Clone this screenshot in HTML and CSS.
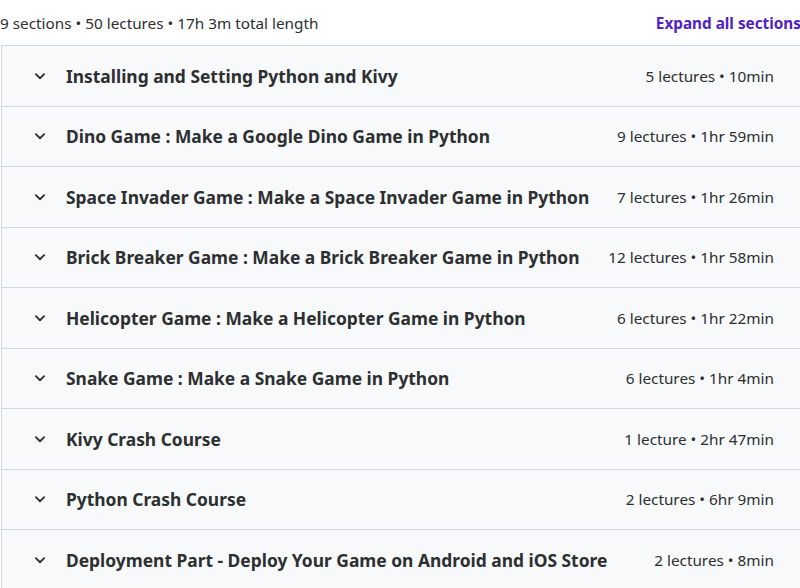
FILE: index.html
```html
<!DOCTYPE html>
<html lang="en">

<head>
    <meta charset="UTF-8">
    <meta name="viewport" content="width=device-width, initial-scale=1.0">
    <title>Course content</title>
    <link rel="stylesheet" href="styles.css">
</head>

<body>
    <div class="conteudo">
        <div class="cabecalho">
            <span class="resumo">9 sections • 50 lectures • 17h 3m total length</span>
            <button class="expandir">Expand all sections</button>
        </div>

        <div class="secoes">
            <div class="secao">
                <svg class="seta" viewBox="0 0 24 24"><path d="M6.5 9.5l5.5 5.5 5.5-5.5"/></svg>
                <span class="titulo">Installing and Setting Python and Kivy</span>
                <span class="info">5 lectures • 10min</span>
            </div>
            <div class="secao">
                <svg class="seta" viewBox="0 0 24 24"><path d="M6.5 9.5l5.5 5.5 5.5-5.5"/></svg>
                <span class="titulo">Dino Game : Make a Google Dino Game in Python</span>
                <span class="info">9 lectures • 1hr 59min</span>
            </div>
            <div class="secao">
                <svg class="seta" viewBox="0 0 24 24"><path d="M6.5 9.5l5.5 5.5 5.5-5.5"/></svg>
                <span class="titulo">Space Invader Game : Make a Space Invader Game in Python</span>
                <span class="info">7 lectures • 1hr 26min</span>
            </div>
            <div class="secao">
                <svg class="seta" viewBox="0 0 24 24"><path d="M6.5 9.5l5.5 5.5 5.5-5.5"/></svg>
                <span class="titulo">Brick Breaker Game : Make a Brick Breaker Game in Python</span>
                <span class="info">12 lectures • 1hr 58min</span>
            </div>
            <div class="secao">
                <svg class="seta" viewBox="0 0 24 24"><path d="M6.5 9.5l5.5 5.5 5.5-5.5"/></svg>
                <span class="titulo">Helicopter Game : Make a Helicopter Game in Python</span>
                <span class="info">6 lectures • 1hr 22min</span>
            </div>
            <div class="secao">
                <svg class="seta" viewBox="0 0 24 24"><path d="M6.5 9.5l5.5 5.5 5.5-5.5"/></svg>
                <span class="titulo">Snake Game : Make a Snake Game in Python</span>
                <span class="info">6 lectures • 1hr 4min</span>
            </div>
            <div class="secao">
                <svg class="seta" viewBox="0 0 24 24"><path d="M6.5 9.5l5.5 5.5 5.5-5.5"/></svg>
                <span class="titulo">Kivy Crash Course</span>
                <span class="info">1 lecture • 2hr 47min</span>
            </div>
            <div class="secao">
                <svg class="seta" viewBox="0 0 24 24"><path d="M6.5 9.5l5.5 5.5 5.5-5.5"/></svg>
                <span class="titulo">Python Crash Course</span>
                <span class="info">2 lectures • 6hr 9min</span>
            </div>
            <div class="secao">
                <svg class="seta" viewBox="0 0 24 24"><path d="M6.5 9.5l5.5 5.5 5.5-5.5"/></svg>
                <span class="titulo">Deployment Part - Deploy Your Game on Android and iOS Store</span>
                <span class="info">2 lectures • 8min</span>
            </div>
        </div>
    </div>
</body>

</html>
```

FILE: styles.css
```css
body {
    margin: 0;
    background-color: #fff;
    font-family: "Noto Sans", Arial, sans-serif;
    color: #2d2f31;
    overflow: hidden;
}

.conteudo {
    width: 822px;
}

.cabecalho {
    display: flex;
    justify-content: space-between;
    align-items: center;
    height: 45px;
    padding-right: 21px;
}

.resumo {
    font-size: 15.3px;
    color: #2d2f31;
}

.expandir {
    border: none;
    background: none;
    padding: 0;
    font-family: inherit;
    font-size: 15.3px;
    font-weight: 700;
    color: #5022c3;
    cursor: pointer;
}

.secoes {
    margin-left: 1px;
    border: 1px solid #d1d7dc;
    border-bottom: none;
}

.secao {
    display: flex;
    align-items: center;
    height: 59.5px;
    padding: 0 47px 0 29px;
    background-color: #f7f9fa;
    border-bottom: 1px solid #d1d7dc;
}

.seta {
    width: 18px;
    height: 18px;
    margin-right: 17px;
    fill: none;
    stroke: #2d2f31;
    stroke-width: 2.4;
    stroke-linecap: round;
    stroke-linejoin: round;
}

.titulo {
    flex: 1;
    font-size: 17.4px;
    font-weight: 700;
}

.info {
    font-size: 15.3px;
    margin-left: 16px;
}
```
